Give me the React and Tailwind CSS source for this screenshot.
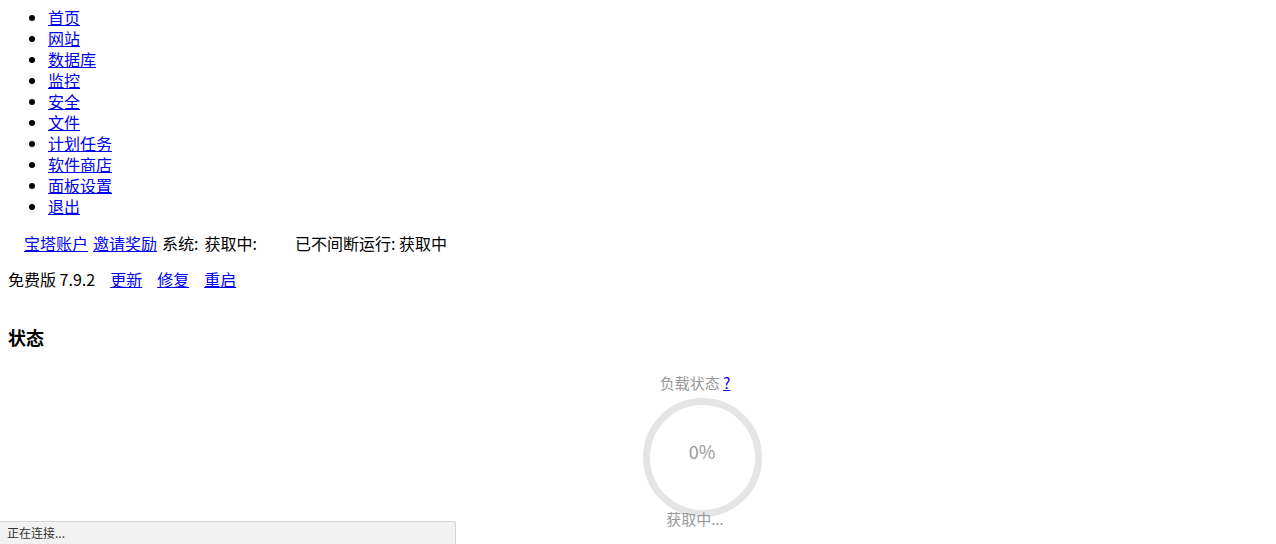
const nav = ['首页', '网站', '数据库', '监控', '安全', '文件', '计划任务', '软件商店', '面板设置', '退出'];

const font = "font-['Microsoft_YaHei','Noto_Sans_CJK_SC',sans-serif]";

export default function App() {
  return (
    <div className={`relative min-h-[544px] bg-white text-[16px] text-black ${font}`}>
      <ul className="list-disc pl-[48px] pt-[7px] leading-[21px]">
        {nav.map((n) => (
          <li key={n}>
            <a href="#" className="text-[#0000ee] underline">{n}</a>
          </li>
        ))}
      </ul>

      <div className="mt-[16px] flex items-center pl-[24px] leading-[21px]">
        <a href="#" className="text-[#0000ee] underline">宝塔账户</a>
        <a href="#" className="ml-[5px] text-[#0000ee] underline">邀请奖励</a>
        <span className="ml-[5px]">系统:</span>
        <span className="ml-[6px]">获取中:</span>
        <span className="ml-[38px]">已不间断运行: 获取中</span>
      </div>

      <div className="mt-[15px] flex items-center pl-[8px] leading-[21px]">
        <span>免费版 7.9.2</span>
        <a href="#" className="ml-[15px] text-[#0000ee] underline">更新</a>
        <a href="#" className="ml-[15px] text-[#0000ee] underline">修复</a>
        <a href="#" className="ml-[15px] text-[#0000ee] underline">重启</a>
      </div>

      <h3 className="mt-[35px] pl-[8px] text-[18px] font-bold leading-[24px]">状态</h3>

      <div className="mt-[24px] flex flex-col items-center pl-[128px] text-[#999]">
        <div className="mr-[14px] text-[15px] leading-[20px]">
          负载状态 <a href="#" className="text-[#0000ee] underline">?</a>
        </div>
        <div className="mt-[5px] grid h-[119px] w-[119px] place-items-center rounded-full border-[7px] border-[#e5e5e5]">
          <span className="mb-[12px] text-[18px]">0%</span>
        </div>
        <div className="-mt-[8px] mr-[14px] text-[15px] leading-[20px]">获取中...</div>
        <div className="mt-[16px] text-[15px] leading-[20px]">CPU使用率</div>
      </div>

      <div className="fixed bottom-0 left-0 flex h-[23px] w-[456px] items-center rounded-tr-[3px] border-t border-r border-[#d5d5d5] bg-[#f2f2f2] pl-[7px] text-[12px] text-[#333]">
        正在连接...
      </div>
    </div>
  );
}
